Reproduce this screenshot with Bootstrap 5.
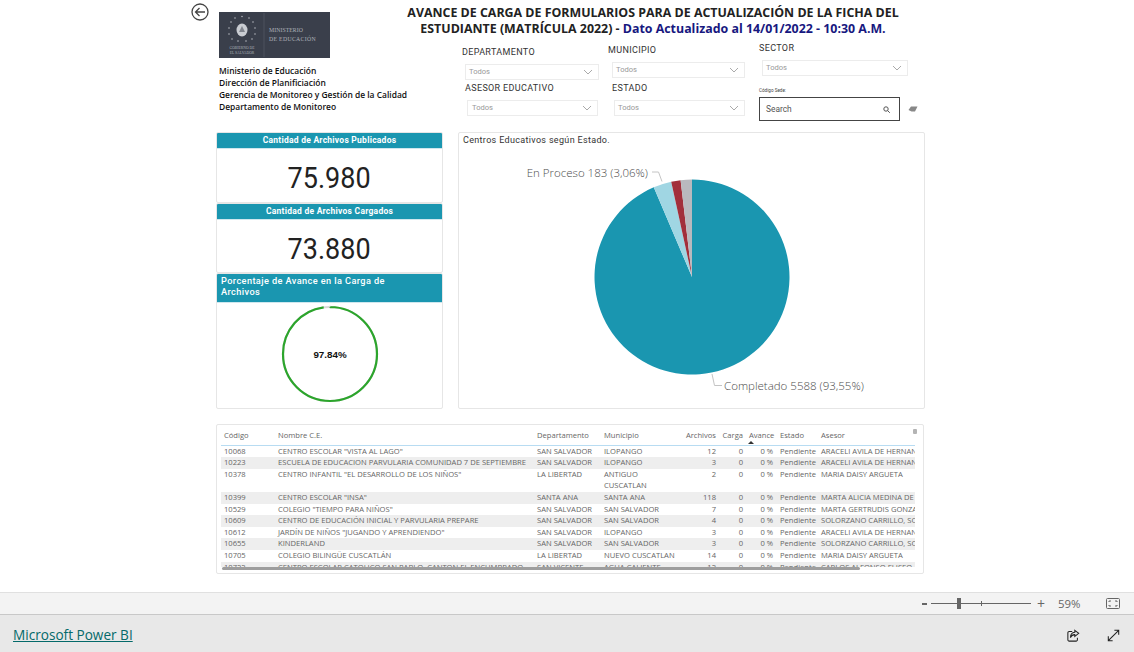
<!DOCTYPE html>
<html lang="es">
<head>
<meta charset="utf-8">
<title>Avance de carga</title>
<link href="https://cdn.jsdelivr.net/npm/bootstrap@5.3.0/dist/css/bootstrap.min.css" rel="stylesheet">
<style>
html,body{height:652px;overflow:hidden;background:#fff;font-family:"Open Sans","Noto Sans",sans-serif;}
.rpt{height:592px;padding-left:191px;overflow:hidden;}
.back-ico{width:18px;height:18px;margin-top:3px;display:block;}
.top-left{width:219px;}
.logo-box{display:block;width:111px;height:46px;margin:-9px 0 0 28px;}
.org{margin:7px 0 0 28px;font-size:8.45px;line-height:12px;color:#111;font-weight:600;white-space:nowrap;}
.top-right{width:556px;}
.ttl{width:500px;margin:5px 0 0 -7px;font-size:12.4px;line-height:16px;font-weight:700;color:#222;text-align:center;white-space:nowrap;}
.ttl span{color:#17187f;}
.din{font-family:Roboto,"Noto Sans",sans-serif;}
.fcols{margin-left:52px;}
.fcol-a{width:147px;padding-top:9px;}
.fcol-b{width:150px;padding-top:7px;}
.fcol-c{width:160px;padding-top:5px;}
.flabel{font-size:9px;line-height:12px;color:#333;letter-spacing:.35px;white-space:nowrap;}
.fbox{border:1px solid #ececec;height:16px;padding:0 5px 0 3px;font-size:7.6px;color:#999;display:flex;align-items:center;justify-content:space-between;margin-top:6px;}
.fbox svg{width:10px;height:6px;}
.tiny{font-size:4.6px;line-height:6px;color:#444;margin-top:12px;}
.srch{width:141px;height:24px;border:1px solid #444;padding:0 9px 0 6px;font-size:8.4px;color:#555;display:flex;align-items:center;justify-content:space-between;}
.mid{margin:0 0 0 25px;height:277px;}
.kpis{width:227px;}
.pbox{border:1px solid #e6e6e6;border-radius:2px;background:#fff;overflow:hidden;}
.phead{background:#1a96b0;color:#fff;font-size:8.5px;font-weight:700;letter-spacing:.25px;line-height:15px;text-align:center;border-bottom:1px solid #cfe7ee;}
.big{font-size:30px;line-height:58px;text-align:center;color:#222;}
.big span{display:inline-block;transform:scaleX(.9);}
.k1{height:71px;}
.k2{height:70px;}
.k3{height:136px;}
.k3 .phead{text-align:left;line-height:11px;padding:1px 50px 4px 4px;height:29px;font-weight:500;font-size:9.2px;letter-spacing:.4px;}
.gauge{display:block;width:225px;height:106px;}
.pie-panel{width:467px;margin-left:15px;height:277px;}
.pie-ttl{font-size:9px;line-height:12px;padding:1px 0 0 4px;color:#333;letter-spacing:.33px;}
.pie-svg{display:block;width:465px;height:262px;}
.pie-svg text{font-size:11.5px;font-weight:300;fill:#4d4d4d;font-family:"Open Sans",sans-serif;}
.tbl-wrap{margin:15px 0 0 25px;width:708px;height:150px;position:relative;padding:0 8px 0 4px;}
.tbl-clip{height:142px;overflow:hidden;}
.tb{table-layout:fixed;border-collapse:collapse;width:720px;color:#666;font-size:7.6px;line-height:11.6px;}
.tb th{font-weight:400;padding:5px 3px 3px;height:20px;vertical-align:bottom;border-bottom:1px solid #b8dcf2;white-space:nowrap;}
.tb td{padding:0 3px;vertical-align:top;overflow:hidden;white-space:nowrap;}
.tb td.wr{white-space:normal;}
.tb tr:nth-child(even) td{background:#eee;}
.tb .rt{text-align:right;}
.tb .pe{padding-right:4px;}
.sort{position:absolute;left:531px;top:16px;width:0;height:0;border:3px solid transparent;border-bottom:3px solid #333;border-top:0;}
.hbar{position:absolute;left:5px;top:142px;width:638px;height:3px;background:#9e9e9e;border-radius:2px;}
.vdot{position:absolute;right:6px;top:4px;width:4px;height:5px;background:#b4b4b4;border-radius:1px;}
.zoombar{height:23px;background:#f3f3f3;border-top:1px solid #e0e0e0;border-bottom:1px solid #c8c8c8;padding-right:14px;color:#666;}
.zminus{width:5px;height:2px;background:#666;}
.zplus{font-size:14px;line-height:14px;margin-left:5px;width:10px;text-align:center;}
.zpct{margin-left:12px;width:28px;font-size:11.4px;}
.ztrack{width:100px;height:1px;background:#666;margin-left:4px;position:relative;}
.zthumb{position:absolute;left:26px;top:-5px;width:4px;height:11px;background:#666;}
.ztick{position:absolute;left:50px;top:-2px;width:1px;height:5px;background:#666;}
.zfit{width:14px;height:11px;margin-left:20px;display:block;}
.foot{height:37px;background:#e8e8e8;padding:4px 14px 0 13px;}
.pbi{font-size:13.6px;color:#046a6a;text-decoration:underline;}
.foot svg{width:13px;height:13px;display:block;}
</style>
</head>
<body>
<div class="rpt">
  <div class="d-flex" style="height:132px">
    <div class="top-left">
      <svg class="back-ico" viewBox="0 0 18 18" fill="none" stroke="#444" stroke-width="1.3"><circle cx="9" cy="9" r="8"/><path d="M14 9H4.500M8.500 5 4.500 9l4 4"/></svg>
      <svg class="logo-box" viewBox="0 0 111 46">
        <rect width="111" height="46" fill="#3a3f4b"/>
        <g fill="#c9ccd2">
          <ellipse cx="23" cy="18" rx="5.500" ry="6.500"/>
          <circle cx="23" cy="4.500" r=".7"/><circle cx="16" cy="6" r=".7"/><circle cx="30" cy="6" r=".7"/><circle cx="12" cy="10" r=".7"/><circle cx="34" cy="10" r=".7"/><circle cx="10" cy="16" r=".7"/><circle cx="36" cy="16" r=".7"/><circle cx="10" cy="22" r=".7"/><circle cx="36" cy="22" r=".7"/><circle cx="13" cy="27" r=".7"/><circle cx="33" cy="27" r=".7"/><circle cx="19" cy="29" r=".7"/><circle cx="27" cy="29" r=".7"/>
        </g>
        <path d="M23 14l-3 6h6z" fill="#80848d"/>
        <path d="M45 1v44" stroke="#5b606b" stroke-width=".6"/>
        <g fill="#aeb2ba" font-family="Liberation Serif,serif">
          <text x="50" y="20" font-size="5.800" letter-spacing=".05">MINISTERIO</text>
          <text x="50" y="29" font-size="5.800" letter-spacing=".3">DE EDUCACIÓN</text>
          <text x="23" y="37" font-size="3.700" text-anchor="middle">GOBIERNO DE</text>
          <text x="23" y="42" font-size="3.700" text-anchor="middle">EL SALVADOR</text>
        </g>
      </svg>
      <div class="org">Ministerio de Educación<br>Dirección de Planificiación<br>Gerencia de Monitoreo y Gestión de la Calidad<br>Departamento de Monitoreo</div>
    </div>
    <div class="top-right">
      <div class="ttl">AVANCE DE CARGA DE FORMULARIOS PARA DE ACTUALIZACIÓN DE LA FICHA DEL<br>ESTUDIANTE (MATRÍCULA 2022) - <span>Dato Actualizado al 14/01/2022 - 10:30 A.M.</span></div>
      <div class="d-flex din fcols">
        <div class="fcol-a">
          <div class="flabel">DEPARTAMENTO</div>
          <div class="fbox din" style="margin-left:3px;margin-right:10px"><span>Todos</span><svg viewBox="0 0 10 6" fill="none" stroke="#aaa"><path d="M1 1l4 4 4-4"/></svg></div>
          <div class="flabel" style="margin:2px 0 0 3px">ASESOR EDUCATIVO</div>
          <div class="fbox din" style="margin-left:5px;margin-right:11px;padding-left:4px"><span>Todos</span><svg viewBox="0 0 10 6" fill="none" stroke="#aaa"><path d="M1 1l4 4 4-4"/></svg></div>
        </div>
        <div class="fcol-b">
          <div class="flabel" style="margin-left:-1px">MUNICIPIO</div>
          <div class="fbox din" style="margin-left:3px;margin-right:14px"><span>Todos</span><svg viewBox="0 0 10 6" fill="none" stroke="#aaa"><path d="M1 1l4 4 4-4"/></svg></div>
          <div class="flabel" style="margin:4px 0 0 3px">ESTADO</div>
          <div class="fbox din" style="margin-left:5px;margin-right:14px"><span>Todos</span><svg viewBox="0 0 10 6" fill="none" stroke="#aaa"><path d="M1 1l4 4 4-4"/></svg></div>
        </div>
        <div class="fcol-c">
          <div class="flabel">SECTOR</div>
          <div class="fbox din" style="margin-left:3px;margin-right:11px"><span>Todos</span><svg viewBox="0 0 10 6" fill="none" stroke="#aaa"><path d="M1 1l4 4 4-4"/></svg></div>
          <div class="tiny">Código Sede:</div>
          <div class="d-flex align-items-center" style="margin-top:3px">
            <div class="srch din"><span>Search</span><svg width="7" height="7" viewBox="0 0 7 7" fill="none" stroke="#555"><circle cx="3" cy="3" r="2.200"/><path d="M4.600 4.600 6.800 6.800"/></svg></div>
            <svg class="ms-2" width="10" height="7" viewBox="0 0 10 7"><path d="M3 .5h6.500L7 5.500H3.500L.5 4z" fill="#888"/></svg>
          </div>
        </div>
      </div>
    </div>
  </div>

  <div class="d-flex mid">
    <div class="kpis din">
      <div class="pbox k1"><div class="phead">Cantidad de Archivos Publicados</div><div class="big"><span>75.980</span></div></div>
      <div class="pbox k2"><div class="phead">Cantidad de Archivos Cargados</div><div class="big"><span>73.880</span></div></div>
      <div class="pbox k3">
        <div class="phead">Porcentaje de Avance en la Carga de Archivos</div>
        <svg class="gauge" viewBox="0 0 225 106">
          <circle cx="113" cy="51" r="47" fill="none" stroke="#d8d8d8" stroke-width="2.200"/>
          <circle cx="113" cy="51" r="47" fill="none" stroke="#2ca52c" stroke-width="2.200" pathLength="100" stroke-dasharray="97.84 2.16" transform="rotate(-90 113 51)"/>
          <text x="113" y="55" text-anchor="middle" font-size="9.800" font-weight="700" fill="#111" font-family="Liberation Sans,sans-serif">97.84%</text>
        </svg>
      </div>
    </div>
    <div class="pbox pie-panel">
      <div class="pie-ttl din">Centros Educativos según Estado.</div>
      <svg class="pie-svg" viewBox="0 0 465 262">
        <g transform="translate(233 131)">
          <path d="M0 0V-97.500A97.500 97.500 0 1 1 -38.250 -89.680Z" fill="#1a96b0"/>
          <path d="M0 0-38.250-89.680A97.500 97.500 0 0 1 -20.770 -95.260Z" fill="#a0d6e3"/>
          <path d="M0 0-20.770-95.260A97.500 97.500 0 0 1 -11.380 -96.830Z" fill="#a22f3b"/>
          <path d="M0 0-11.380-96.830A97.500 97.500 0 0 1 0 -97.500Z" fill="#b9b9be"/>
        </g>
        <path d="M193 26h6.500l3.500 9.500M253 228l2.500 11.500h7.500" fill="none" stroke="#c4c4c4"/>
        <text x="189" y="31" text-anchor="end">En Proceso 183 (3,06%)</text>
        <text x="265" y="244">Completado 5588 (93,55%)</text>
      </svg>
    </div>
  </div>

  <div class="pbox tbl-wrap">
    <div class="tbl-clip">
      <table class="tb">
        <colgroup><col style="width:54px"><col style="width:259px"><col style="width:67px"><col style="width:80px"><col style="width:38px"><col style="width:27px"><col style="width:31px"><col style="width:41px"><col style="width:123px"></colgroup>
        <thead><tr><th>Código</th><th>Nombre C.E.</th><th>Departamento</th><th>Municipio</th><th class="rt">Archivos</th><th class="rt">Carga</th><th class="rt pe">Avance</th><th>Estado</th><th>Asesor</th></tr></thead>
        <tbody>
          <tr><td>10068</td><td>CENTRO ESCOLAR "VISTA AL LAGO"</td><td>SAN SALVADOR</td><td>ILOPANGO</td><td class="rt">12</td><td class="rt">0</td><td class="rt pe">0 %</td><td>Pendiente</td><td>ARACELI AVILA DE HERNANDEZ</td></tr>
          <tr><td>10223</td><td>ESCUELA DE EDUCACION PARVULARIA COMUNIDAD 7 DE SEPTIEMBRE</td><td>SAN SALVADOR</td><td>ILOPANGO</td><td class="rt">3</td><td class="rt">0</td><td class="rt pe">0 %</td><td>Pendiente</td><td>ARACELI AVILA DE HERNANDEZ</td></tr>
          <tr><td>10378</td><td>CENTRO INFANTIL "EL DESARROLLO DE LOS NIÑOS"</td><td>LA LIBERTAD</td><td class="wr">ANTIGUO CUSCATLAN</td><td class="rt">2</td><td class="rt">0</td><td class="rt pe">0 %</td><td>Pendiente</td><td>MARIA DAISY ARGUETA</td></tr>
          <tr><td>10399</td><td>CENTRO ESCOLAR "INSA"</td><td>SANTA ANA</td><td>SANTA ANA</td><td class="rt">118</td><td class="rt">0</td><td class="rt pe">0 %</td><td>Pendiente</td><td>MARTA ALICIA MEDINA DE LOPEZ</td></tr>
          <tr><td>10529</td><td>COLEGIO "TIEMPO PARA NIÑOS"</td><td>SAN SALVADOR</td><td>SAN SALVADOR</td><td class="rt">7</td><td class="rt">0</td><td class="rt pe">0 %</td><td>Pendiente</td><td>MARTA GERTRUDIS GONZALEZ</td></tr>
          <tr><td>10609</td><td>CENTRO DE EDUCACIÓN INICIAL Y PARVULARIA PREPARE</td><td>SAN SALVADOR</td><td>SAN SALVADOR</td><td class="rt">4</td><td class="rt">0</td><td class="rt pe">0 %</td><td>Pendiente</td><td>SOLORZANO CARRILLO, SONIA</td></tr>
          <tr><td>10612</td><td>JARDÍN DE NIÑOS "JUGANDO Y APRENDIENDO"</td><td>SAN SALVADOR</td><td>ILOPANGO</td><td class="rt">3</td><td class="rt">0</td><td class="rt pe">0 %</td><td>Pendiente</td><td>ARACELI AVILA DE HERNANDEZ</td></tr>
          <tr><td>10655</td><td>KINDERLAND</td><td>SAN SALVADOR</td><td>SAN SALVADOR</td><td class="rt">3</td><td class="rt">0</td><td class="rt pe">0 %</td><td>Pendiente</td><td>SOLORZANO CARRILLO, SONIA</td></tr>
          <tr><td>10705</td><td>COLEGIO BILINGÜE CUSCATLÁN</td><td>LA LIBERTAD</td><td>NUEVO CUSCATLAN</td><td class="rt">14</td><td class="rt">0</td><td class="rt pe">0 %</td><td>Pendiente</td><td>MARIA DAISY ARGUETA</td></tr>
          <tr><td>10722</td><td>CENTRO ESCOLAR CATOLICO SAN PABLO, CANTON EL ENCUMBRADO</td><td>SAN VICENTE</td><td>AGUA CALIENTE</td><td class="rt">12</td><td class="rt">0</td><td class="rt pe">0 %</td><td>Pendiente</td><td>CARLOS ALFONSO ELISEO</td></tr>
        </tbody>
      </table>
    </div>
    <span class="sort"></span><span class="hbar"></span><span class="vdot"></span>
  </div>
</div>

<div class="zoombar d-flex align-items-center justify-content-end">
  <span class="zminus"></span>
  <span class="ztrack"><span class="zthumb"></span><span class="ztick"></span></span>
  <span class="zplus">+</span>
  <span class="zpct">59%</span>
  <svg class="zfit" viewBox="0 0 14 11" fill="none" stroke="#666"><rect x=".5" y=".5" width="13" height="10" rx="1"/><path d="M3 4V3h2M9 3h2v1M11 7v1H9M5 8H3V7"/></svg>
</div>
<div class="foot d-flex align-items-center justify-content-between">
  <a class="pbi" href="#">Microsoft Power BI</a>
  <div class="d-flex" style="gap:27px">
    <svg viewBox="0 0 15 15" fill="none" stroke="#222" stroke-width="1.200"><path d="M6 3H2.500A1.500 1.500 0 0 0 1 4.500v8A1.500 1.500 0 0 0 2.500 14h8a1.500 1.500 0 0 0 1.500-1.500V10"/><path d="M9 1.500 13.500 5 9 8.500V6.500C6.500 6.500 5 7.500 4 10c0-3.500 2-6 5-6.200z"/></svg>
    <svg viewBox="0 0 15 15" fill="none" stroke="#222" stroke-width="1.200"><path d="M1.500 13.500l12-12M8.500 1.500h5v5M1.500 8.500v5h5"/></svg>
  </div>
</div>
</body>
</html>
